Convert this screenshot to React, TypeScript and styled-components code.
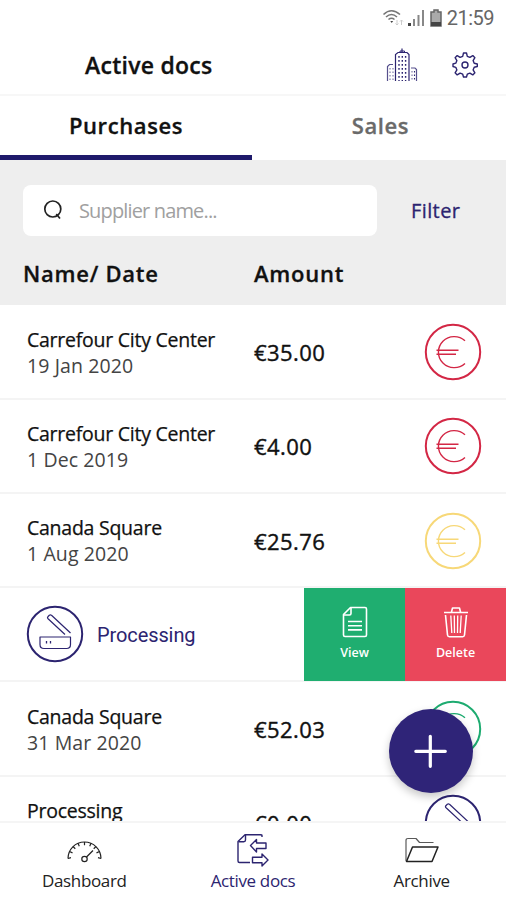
import React from 'react';
import styled, { createGlobalStyle } from 'styled-components';

const NAVY = '#2c2470';

const Global = createGlobalStyle`
  *, *::before, *::after { box-sizing: border-box; }
  body { margin: 0; background: #fff; }
  button { font: inherit; border: 0; padding: 0; background: none; color: inherit; letter-spacing: inherit; }
`;

const Screen = styled.div`
  position: relative;
  display: flex;
  flex-direction: column;
  width: 506px;
  height: 900px;
  overflow: hidden;
  background: #fff;
  color: #111;
  font-family: 'Open Sans', 'Noto Sans', sans-serif;
  white-space: nowrap;
`;

const StatusBar = styled.div`
  display: flex;
  flex: none;
  justify-content: flex-end;
  align-items: center;
  height: 36px;
  padding-right: 12px;
`;

const Clock = styled.span`
  margin-left: 5px;
  font: 400 20px/24px Roboto, sans-serif;
  letter-spacing: -0.5px;
  color: #666;
`;

const Header = styled.header`
  display: flex;
  flex: none;
  align-items: center;
  height: 60px;
  padding: 0 28px 0 85px;
  border-bottom: 2px solid #f7f7f7;
`;

const Title = styled.h1`
  flex: 1;
  margin: 0;
  font-size: 23px;
  font-weight: 600;
  line-height: 32px;
  letter-spacing: 0.25px;
  -webkit-text-stroke: 0.3px currentColor;
`;

const HeaderIcons = styled.div`
  display: flex;
  align-items: center;
  gap: 34px;
`;

const Tabs = styled.nav`
  display: flex;
  flex: none;
  height: 64px;
`;

const Tab = styled.button<{ $active?: boolean }>`
  flex: none;
  width: ${p => (p.$active ? '252px' : '257px')};
  padding-bottom: 1px;
  border-bottom: ${p => (p.$active ? '5px solid #1f1a6b' : '5px solid transparent')};
  font-size: 22px;
  font-weight: 600;
  letter-spacing: 0.6px;
  -webkit-text-stroke: 0.3px currentColor;
  color: ${p => (p.$active ? '#111' : '#6a6a6a')};
`;

const Filters = styled.section`
  flex: none;
  height: 145.4px;
  padding: 24.5px 23px 0;
  background: #eee;
`;

const SearchRow = styled.div`
  display: flex;
  align-items: center;
`;

const SearchBox = styled.div`
  display: flex;
  align-items: center;
  width: 354px;
  height: 51px;
  padding-left: 20px;
  gap: 15px;
  border-radius: 8px;
  background: #fff;
`;

const Placeholder = styled.span`
  font-size: 20px;
  font-weight: 400;
  letter-spacing: -0.85px;
  color: #a0a0a0;
`;

const FilterButton = styled.button`
  margin-left: 34px;
  font-size: 20px;
  font-weight: 400;
  letter-spacing: 0.4px;
  -webkit-text-stroke: 0.3px currentColor;
  color: ${NAVY};
`;

const ColumnHeads = styled.div`
  display: grid;
  grid-template-columns: 231px 1fr;
  margin-top: 22.5px;
  font-size: 22px;
  font-weight: 600;
  line-height: 30px;
  letter-spacing: 0.75px;
  -webkit-text-stroke: 0.3px currentColor;
`;

const List = styled.main`
  flex: 1;
  min-height: 0;
  overflow: hidden;
`;

const Row = styled.div`
  display: grid;
  grid-template-columns: 227px 1fr 58px;
  align-items: center;
  height: 94.25px;
  padding: 1px 24px 0 27px;
  border-bottom: 2px solid #f4f4f4;
`;

const Name = styled.div`
  padding-top: 1px;
  font-size: 19.5px;
  line-height: 26px;
  letter-spacing: -0.25px;
  -webkit-text-stroke: 0.25px currentColor;
`;

const DateText = styled.div`
  font-size: 19.5px;
  line-height: 26px;
  letter-spacing: 0.1px;
  color: #444;
`;

const Amount = styled.div`
  font-size: 22px;
  line-height: 30px;
  letter-spacing: 0.45px;
  -webkit-text-stroke: 0.4px currentColor;
`;

const SwipedRow = styled.div`
  display: flex;
  align-items: center;
  height: 94.25px;
  padding-left: 26px;
  border-bottom: 2px solid #f4f4f4;
`;

const SwipedLabel = styled.div`
  flex: 1;
  padding: 2px 0 0 13px;
  font: 400 20px/26px Roboto, sans-serif;
  letter-spacing: -0.1px;
  color: ${NAVY};
`;

const Action = styled.button<{ $color: string }>`
  display: flex;
  flex-direction: column;
  align-items: center;
  align-self: stretch;
  width: 101px;
  height: 93px;
  padding-top: 18px;
  gap: 6px;
  background: ${p => p.$color};
  color: #fff;
  font-size: 12.5px;
  font-weight: 600;
  line-height: 18px;
`;

const AddButton = styled.button`
  position: absolute;
  left: 389px;
  top: 709px;
  display: grid;
  place-items: center;
  width: 84px;
  height: 84px;
  border-radius: 50%;
  background: #2f2478;
  box-shadow: 0 4px 8px rgba(0, 0, 0, 0.22);
`;

const BottomNav = styled.nav`
  display: grid;
  flex: none;
  grid-template-columns: repeat(3, 1fr);
  height: 79px;
  border-top: 2px solid #f5f5f5;
  background: #fff;
`;

const NavItem = styled.button<{ $active?: boolean }>`
  display: flex;
  flex-direction: column;
  align-items: center;
  padding-top: 10px;
  gap: 2px;
  font-size: 17px;
  line-height: 24px;
  letter-spacing: -0.35px;
  color: ${p => (p.$active ? NAVY : '#222')};
`;

const WifiIcon = () => (
  <svg width="24" height="20" viewBox="0 0 24 20" fill="none" stroke="#777" strokeWidth="1.6">
    <path d="M1.5 6.5Q9.500-1 18 6.500" />
    <path d="M4 9Q9.500 4 15 9" />
    <path d="M6.500 11.500Q9.500 9 12.500 11.500" />
    <path d="m8.300 13 1.400 2 1.500-2Z" fill="#444" stroke="none" />
    <path d="M15 17v-5m-1.500 3.500L15 17l1.500-1.500M19.500 17v-5M18 13.500l1.500-1.500 1.500 1.500" stroke="#ccc" strokeWidth="1" />
  </svg>
);

const SignalIcon = () => (
  <svg width="18" height="18" viewBox="0 0 18 18" fill="#888">
    <path d="M0 14h3v3H0z" fill="#444" />
    <path d="M5 10h2v7H5zM9.500 6h2v11h-2zM14 1h2v16h-2z" />
  </svg>
);

const BatteryIcon = () => (
  <svg width="12" height="18" viewBox="0 0 12 18">
    <path d="M4 1h4v2h3v14H1V3h3Z" fill="#aaa" stroke="#666" strokeWidth="1.500" />
    <path d="M1 13h10v4H1z" fill="#444" />
  </svg>
);

const StatusIcons = styled.div`
  display: flex;
  align-items: center;
  svg + svg { margin-left: 2px; }
  svg + svg + svg { margin-left: 4px; }
`;

const CityIcon = () => (
  <svg width="32" height="34" viewBox="0 0 32 34" fill="none" stroke={NAVY}>
    <path d="M9.500 33V6.500L12 4.500h9l2 2V33M16 4.500V.5" strokeWidth="1.200" />
    <path d="M14 4.500V3h4.500v1.500" strokeWidth="1" />
    <path d="M1.500 33V18.500l2-2H7M25 20h4l1.500 1.500V33" strokeWidth="1.200" opacity=".8" />
    <path d="M13 8v25M16.300 8v25M19.600 8v25" strokeWidth="1.400" strokeDasharray="1.800 2.200" />
    <path d="M4 20v13M7 20v13M26 23v10" strokeWidth="1.200" strokeDasharray="1.500 2" opacity=".6" />
    <path d="M28.500 23v10" strokeWidth="1.100" strokeDasharray="1.500 2" />
  </svg>
);

const GearIcon = () => (
  <svg width="26" height="26" viewBox="0 0 26 26" fill="none" stroke={NAVY} strokeWidth="1.400" strokeLinejoin="round">
    <path d="M11.500 1h3l.8 3.300 2.600 1.100 2.900-1.800 2.100 2.100-1.800 2.900 1.100 2.600 3.100.8v2.500l-3.100.8-1.100 2.600 1.800 2.900-2.100 2.100-2.900-1.800-2.600 1.100-.8 2.800h-3l-.8-2.800-2.600-1.100-2.900 1.800-2.100-2.100 1.800-2.900-1.100-2.600L1 14.500V12l2.800-.8 1.100-2.600-1.800-2.900 2.100-2.100 2.900 1.800 2.600-1.100Z" />
    <circle cx="13" cy="13" r="3" />
  </svg>
);

const SearchIcon = () => (
  <svg width="21" height="22" viewBox="0 0 21 22" fill="none" stroke="#222" strokeWidth="1.700">
    <circle cx="9.800" cy="10" r="8" />
    <path d="m13.300 15 3.700 4.500" />
  </svg>
);

const EuroIcon = ({ color }: { color: string }) => (
  <svg width="58" height="58" viewBox="0 0 58 58" fill="none" stroke={color}>
    <circle cx="29" cy="29" r="27.200" strokeWidth="2" />
    <path d="M41 17.800A15.800 15.500 0 1 0 41 40.500" strokeWidth="1.400" />
    <path d="M12.500 27.300h22M12.500 31.300h19.500" strokeWidth="1.400" />
  </svg>
);

const ScannerIcon = () => (
  <svg width="58" height="58" viewBox="0 0 58 58" fill="none" stroke={NAVY}>
    <circle cx="29" cy="29" r="27.200" strokeWidth="2" />
    <path d="M39 29.500 21.800 13.500q-.8-.8.300-2l1.200-1.200q1.200-1 2.200 0L44.500 28" strokeWidth="1.200" />
    <path d="M14 32h30.500v7.500q0 4-4 4H18q-4 0-4-4Z" strokeWidth="1.200" strokeLinejoin="round" />
    <path d="M20.500 36v2.500M24.500 36v2.500" strokeWidth="1.300" />
  </svg>
);

const DocumentIcon = () => (
  <svg width="26" height="32" viewBox="0 0 26 32" fill="none" stroke="#fff" strokeWidth="1.600" strokeLinejoin="round">
    <path d="M8.500 1.500H23q1.500 0 1.500 1.500v26q0 1.500-1.500 1.500H3q-1.500 0-1.500-1.500V8.500Z" />
    <path d="M9 2v5.500q0 1.500-1.500 1.500H2" />
    <path d="M6 15.500h14M6 19.700h14M6 23.900h14" />
  </svg>
);

const TrashIcon = () => (
  <svg width="26" height="32" viewBox="0 0 26 32" fill="none" stroke="#fff" strokeWidth="1.600" strokeLinejoin="round">
    <path d="M1 6.500h24M8.500 6l1-4h7l1 4" />
    <path d="m2.500 9 2 20q.2 1.700 1.800 1.700h13.400q1.600 0 1.800-1.700l2-20" />
    <path d="m7.800 9.500 1 17.500M11.300 9.500l.2 17.500M14.700 9.500l-.2 17.500M18.200 9.500l-1 17.500" strokeWidth="1.300" />
  </svg>
);

const PlusIcon = () => (
  <svg width="34" height="34" viewBox="0 0 34 34" fill="none" stroke="#fff" strokeWidth="3.200" strokeLinecap="round">
    <path d="M16.300 2.300v30M1.800 17.300h29.500" />
  </svg>
);

const GaugeIcon = () => (
  <svg width="36" height="34" viewBox="0 0 36 34" fill="none" stroke="currentColor" strokeWidth="1.200">
    <path d="M2 25.500A16.300 16.300 0 0 1 35 25.500" />
    <path d="M2 25.500l3-.8M3.500 18.500l3 1.400M7 13.500l2.300 2.200M12 10.300l1.300 3M18.500 9v3.200M25 10.300l-1.300 3M30 13.500l-2.300 2.200M33.500 18.500l-3 1.400M35 25.500l-3-.8" />
    <circle cx="18.500" cy="26" r="2.700" />
    <path d="m20.500 24 6.500-6.500" />
  </svg>
);

const DocsIcon = () => (
  <svg width="34" height="34" viewBox="0 0 34 34" fill="none" stroke="currentColor" strokeWidth="1.400" strokeLinejoin="round">
    <path d="M26 4V2.700q0-1-1.500-1H9L2 8.500V28q0 1.500 1.500 1.500H14" />
    <path d="M9.500 2v5q0 1.700-1.700 1.700H2.500" />
    <path d="m14.500 12.500 6-6v3.500h9.500v5.500h-9.500v3.500Z" />
    <path d="m32 27-6-6v3.300h-9.500v5.400H26V33Z" />
  </svg>
);

const FolderIcon = () => (
  <svg width="36" height="34" viewBox="0 0 36 34" fill="none" stroke="currentColor" strokeWidth="1.500" strokeLinejoin="round">
    <path d="M29.500 9.500H15.500l-3.500-4H4Q2 5.500 2 7.500V28" strokeWidth="1.200" opacity=".75" />
    <path d="M2.500 28.500 8.500 14h25.500l-6 14.500Z" />
  </svg>
);

const RED = '#d32745';
const YELLOW = '#f7d878';
const GREEN = '#1dab70';

const documents = [
  { name: 'Carrefour City Center', date: '19 Jan 2020', amount: '€35.00', color: RED },
  { name: 'Carrefour City Center', date: '1 Dec 2019', amount: '€4.00', color: RED },
  { name: 'Canada Square', date: '1 Aug 2020', amount: '€25.76', color: YELLOW },
  { swiped: true, name: 'Processing' },
  { name: 'Canada Square', date: '31 Mar 2020', amount: '€52.03', color: GREEN },
  { name: 'Processing', date: '', amount: '€0.00' },
];

export default function App() {
  return (
    <Screen>
      <Global />
      <StatusBar>
        <StatusIcons>
          <WifiIcon />
          <SignalIcon />
          <BatteryIcon />
        </StatusIcons>
        <Clock>21:59</Clock>
      </StatusBar>
      <Header>
        <Title>Active docs</Title>
        <HeaderIcons>
          <CityIcon />
          <GearIcon />
        </HeaderIcons>
      </Header>
      <Tabs>
        <Tab $active>Purchases</Tab>
        <Tab>Sales</Tab>
      </Tabs>
      <Filters>
        <SearchRow>
          <SearchBox>
            <SearchIcon />
            <Placeholder>Supplier name...</Placeholder>
          </SearchBox>
          <FilterButton>Filter</FilterButton>
        </SearchRow>
        <ColumnHeads>
          <span>Name/ Date</span>
          <span>Amount</span>
        </ColumnHeads>
      </Filters>
      <List>
        {documents.map((doc, i) =>
          doc.swiped ? (
            <SwipedRow key={i}>
              <ScannerIcon />
              <SwipedLabel>{doc.name}</SwipedLabel>
              <Action $color="#1fae70"><DocumentIcon />View</Action>
              <Action $color="#ea475b"><TrashIcon />Delete</Action>
            </SwipedRow>
          ) : (
            <Row key={i}>
              <div>
                <Name>{doc.name}</Name>
                <DateText>{doc.date || '\u00a0'}</DateText>
              </div>
              <Amount>{doc.amount}</Amount>
              {doc.color ? <EuroIcon color={doc.color} /> : <ScannerIcon />}
            </Row>
          ),
        )}
      </List>
      <BottomNav>
        <NavItem><GaugeIcon />Dashboard</NavItem>
        <NavItem $active><DocsIcon />Active docs</NavItem>
        <NavItem><FolderIcon />Archive</NavItem>
      </BottomNav>
      <AddButton aria-label="Add document"><PlusIcon /></AddButton>
    </Screen>
  );
}
